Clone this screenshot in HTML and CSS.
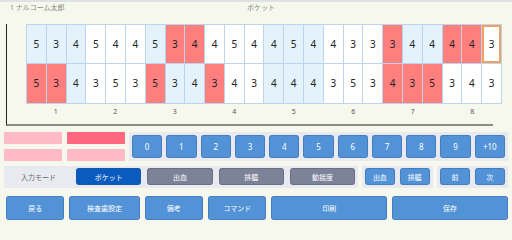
FILE: index.html
```html
<!DOCTYPE html>
<html lang="ja">
<head>
<meta charset="utf-8">
<link rel="stylesheet" href="styles.css">
</head>
<body>
<div class="header">
  <span class="patient">1 ナルコーム太郎</span>
  <span class="mode-title">ポケット</span>
  <span></span>
</div>
<div class="chart">
  <div class="teeth">
    <div class="c b">5</div><div class="c b">3</div><div class="c b">4</div>
    <div class="c w">5</div><div class="c w">4</div><div class="c w">4</div>
    <div class="c b">5</div><div class="c r">3</div><div class="c r">4</div>
    <div class="c w">4</div><div class="c w">5</div><div class="c w">4</div>
    <div class="c b">4</div><div class="c b">5</div><div class="c b">4</div>
    <div class="c w">4</div><div class="c w">3</div><div class="c w">3</div>
    <div class="c r">3</div><div class="c b">4</div><div class="c b">4</div>
    <div class="c r">4</div><div class="c r">4</div><div class="c w sel">3</div>

    <div class="c r">5</div><div class="c r">3</div><div class="c b">4</div>
    <div class="c w">3</div><div class="c w">5</div><div class="c w">3</div>
    <div class="c r">5</div><div class="c b">3</div><div class="c b">4</div>
    <div class="c r">3</div><div class="c w">4</div><div class="c w">3</div>
    <div class="c b">4</div><div class="c b">4</div><div class="c b">4</div>
    <div class="c w">3</div><div class="c w">5</div><div class="c w">3</div>
    <div class="c r">4</div><div class="c r">3</div><div class="c r">5</div>
    <div class="c w">3</div><div class="c w">4</div><div class="c w">3</div>
  </div>
  <div class="labels">
    <span>1</span><span>2</span><span>3</span><span>4</span>
    <span>5</span><span>6</span><span>7</span><span>8</span>
  </div>
</div>
<div class="controls">
  <div class="row-a">
    <div class="swatches">
      <div class="sw light"></div>
      <div class="sw dark"></div>
      <div class="sw light"></div>
      <div class="sw light"></div>
    </div>
    <div class="panel keypad">
      <button class="btn key">0</button>
      <button class="btn key">1</button>
      <button class="btn key">2</button>
      <button class="btn key">3</button>
      <button class="btn key">4</button>
      <button class="btn key">5</button>
      <button class="btn key">6</button>
      <button class="btn key">7</button>
      <button class="btn key">8</button>
      <button class="btn key">9</button>
      <button class="btn key">+10</button>
    </div>
  </div>
  <div class="row-b">
    <div class="panel modes">
      <span class="mode-label">入力モード</span>
      <button class="btn mode active">ポケット</button>
      <button class="btn mode off">出血</button>
      <button class="btn mode off">排膿</button>
      <button class="btn mode off">動揺度</button>
    </div>
    <div class="panel pair">
      <button class="btn small">出血</button>
      <button class="btn small">排膿</button>
    </div>
    <div class="panel pair">
      <button class="btn small">前</button>
      <button class="btn small">次</button>
    </div>
  </div>
  <div class="row-c">
    <button class="btn act g58">戻る</button>
    <button class="btn act g70">検査歯設定</button>
    <button class="btn act g58">備考</button>
    <button class="btn act g58">コマンド</button>
    <button class="btn act g117">印刷</button>
    <button class="btn act g117">保存</button>
  </div>
</div>
</body>
</html>
```

FILE: styles.css
```css
* { box-sizing: border-box; }
html, body { margin: 0; padding: 0; }
body {
  width: 512px;
  height: 223px;
  overflow: hidden;
  background: #f6f7ed;
  border-top: 2px solid #dfe2e3;
  font-family: "Noto Sans", "Noto Sans CJK JP", sans-serif;
}
.header {
  display: grid;
  grid-template-columns: 1fr auto 1fr;
  height: 21px;
  padding-left: 10px;
  font-size: 7px;
  line-height: 12px;
  color: #8a8a8a;
}
.mode-title { text-align: center; }
.chart {
  margin-left: 6px;
  width: 487px;
  height: 102px;
  border-left: 1px solid #222;
  border-bottom: 2px solid #8c8c84;
}
.teeth {
  margin-left: 19px;
  margin-top: 1px;
  width: 476px;
  height: 79.5px;
  display: grid;
  grid-template-columns: repeat(24, 1fr);
  grid-template-rows: 1fr 1fr;
  gap: 1px;
  padding: 1px;
  background: #bcd4ec;
}
.c {
  display: flex;
  align-items: center;
  justify-content: center;
  font-size: 10px;
  color: #222;
}
.c.b { background: #e4f3fb; }
.c.w { background: #ffffff; }
.c.r { background: #ff7f7f; }
.c.sel { box-shadow: inset 0 0 0 2px #f5a062; }
.labels {
  margin-left: 19px;
  width: 476px;
  display: grid;
  grid-template-columns: repeat(8, 1fr);
  font-size: 7px;
  line-height: 14px;
  color: #555;
  text-align: center;
  padding-top: 1px;
}
.controls {
  padding: 0 4px;
}
.row-a {
  margin-top: 6px;
  display: flex;
  gap: 4px;
}
.swatches {
  width: 121px;
  display: grid;
  grid-template-columns: 58px 58px;
  grid-template-rows: 12px 12px;
  column-gap: 5px;
  row-gap: 4.5px;
}
.sw { border-radius: 1px; }
.sw.light { background: #ffbac6; }
.sw.dark { background: #ff6680; }
.panel {
  background: #e9e9f1;
  display: flex;
}
.keypad {
  flex: 1;
  padding: 3px;
  gap: 4px;
  height: 29px;
}
.btn {
  border: 1px solid rgba(40, 80, 140, 0.3);
  border-radius: 3px;
  color: #fff;
  font-family: "Noto Sans", "Noto Sans CJK JP", sans-serif;
  padding: 0;
  background: #5292d6;
  display: flex;
  align-items: center;
  justify-content: center;
}
.key {
  flex: 1;
  font-size: 8px;
}
.row-b {
  margin-top: 4.5px;
  display: flex;
  gap: 3.5px;
  height: 22px;
}
.modes {
  flex: 1;
  padding: 2.5px 3px;
  gap: 6px;
  align-items: stretch;
}
.modes > * { flex: 1; }
.mode-label {
  display: flex;
  align-items: center;
  justify-content: center;
  font-size: 7px;
  color: #6a6a6a;
}
.mode { font-size: 7px; }
.mode.active { background: #0b5bbf; }
.mode.off { background: #7c8298; border-color: rgba(60, 60, 80, 0.25); }
.pair {
  width: 71.5px;
  padding: 2.5px 3.5px;
  gap: 5px;
}
.small {
  flex: 1;
  font-size: 7px;
}
.row-c {
  margin-top: 8px;
  padding-left: 2px;
  display: flex;
  gap: 5px;
  height: 24px;
}
.act { font-size: 7px; flex-basis: 0; }
.g58 { flex-grow: 58; }
.g70 { flex-grow: 70; }
.g117 { flex-grow: 117; }
```
